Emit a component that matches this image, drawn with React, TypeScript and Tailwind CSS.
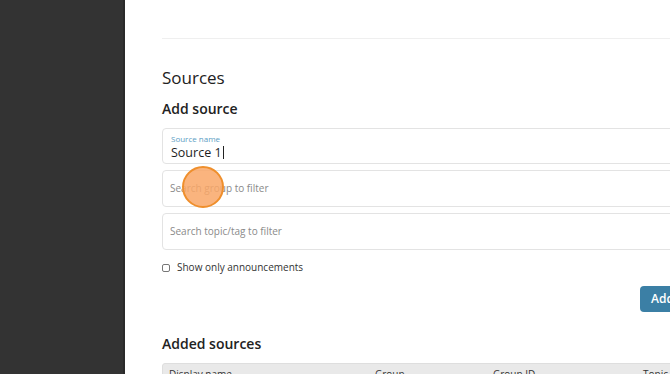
export default function App() {
  return (
    <div className="flex h-[374px] w-[670px] overflow-hidden bg-white" style={{ fontFamily: '"Open Sans", sans-serif' }}>
      {/* Sidebar */}
      <aside className="w-[125px] shrink-0 bg-[#333333] border-r-2 border-[#2a2a2a]" />

      {/* Main */}
      <main className="relative flex-1 pl-[37px]">
        <div className="w-[560px]">
          <div className="h-[39px] border-b border-[#efefef]" />

          <h2 className="mt-[28px] text-[17px] leading-[22px] font-medium text-[#222]">Sources</h2>
          <h3 className="mt-[11px] text-[14px] leading-[18px] font-semibold text-[#222]">Add source</h3>

          <div className="mt-[10px] flex flex-col gap-[6px]">
            <div className="h-[36px] rounded-[4px] border border-[#e3e3e3] px-[8px] pt-[5px]">
              <div className="text-[8px] leading-[10px] text-[#5d9ec4]">Source name</div>
              <div className="flex items-center text-[12.5px] leading-[17px] text-[#1d1d1d]">
                Source 1<span className="ml-px inline-block h-[13px] w-px bg-[#222]" />
              </div>
            </div>
            <div className="flex h-[37px] items-center rounded-[4px] border border-[#e3e3e3] px-[7px] text-[10px] text-[#8a8a8a]">
              Search group to filter
            </div>
            <div className="flex h-[37px] items-center rounded-[4px] border border-[#e3e3e3] px-[7px] text-[10px] text-[#8a8a8a]">
              Search topic/tag to filter
            </div>
          </div>

          <label className="mt-[10px] flex items-center gap-[7px] text-[10px] text-[#333]">
            <span className="inline-block h-[8px] w-[8px] rounded-[2px] border border-[#777]" />
            Show only announcements
          </label>

          <div className="mt-[11px] flex">
            <button className="ml-[478px] h-[26px] shrink-0 whitespace-nowrap rounded-[4px] bg-[#3b7fa5] px-[11px] text-[12px] font-semibold text-white">
              Add source
            </button>
          </div>

          <h3 className="mt-[23px] text-[14px] leading-[18px] font-semibold text-[#222]">Added sources</h3>

          <div className="mt-[10px] grid h-[24px] grid-cols-[206px_118px_150px_1fr] rounded-t-[3px] border border-[#dedede] bg-[#e9e9e9] px-[6px] pt-[3px] text-[10px] text-[#333]">
            <span>Display name</span>
            <span>Group</span>
            <span>Group ID</span>
            <span>Topic</span>
          </div>
        </div>

        {/* Click indicator */}
        <div className="absolute left-[57px] top-[166px] h-[42px] w-[42px] rounded-full border-2 border-[#ef8f2c] bg-[#f9a767]/85" />
      </main>
    </div>
  )
}
